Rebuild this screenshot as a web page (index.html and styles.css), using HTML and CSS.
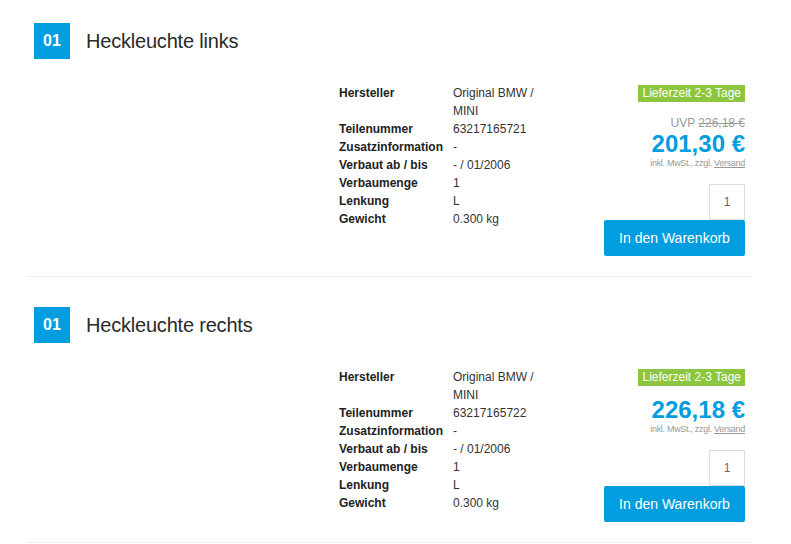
FILE: index.html
```html
<!DOCTYPE html>
<html lang="de">
<head>
<meta charset="utf-8">
<title>Heckleuchte</title>
<link rel="stylesheet" href="styles.css">
</head>
<body>
<div class="list">
  <section class="item">
    <div class="item-head">
      <span class="pos">01</span>
      <h2 class="item-title">Heckleuchte links</h2>
    </div>
    <div class="item-body">
      <div class="item-image"></div>
      <table class="specs">
        <tr><th>Hersteller</th><td>Original BMW / MINI</td></tr>
        <tr><th>Teilenummer</th><td>63217165721</td></tr>
        <tr><th>Zusatzinformation</th><td>-</td></tr>
        <tr><th>Verbaut ab / bis</th><td>- / 01/2006</td></tr>
        <tr><th>Verbaumenge</th><td>1</td></tr>
        <tr><th>Lenkung</th><td>L</td></tr>
        <tr><th>Gewicht</th><td>0.300 kg</td></tr>
      </table>
      <div class="buy">
        <span class="delivery">Lieferzeit 2-3 Tage</span>
        <div class="uvp">UVP <s>226,18 €</s></div>
        <div class="price">201,30 €</div>
        <div class="tax">inkl. MwSt., zzgl. <a href="#">Versand</a></div>
        <input class="qty" type="text" value="1">
        <button class="cart" type="button">In den Warenkorb</button>
      </div>
    </div>
  </section>
  <section class="item">
    <div class="item-head">
      <span class="pos">01</span>
      <h2 class="item-title">Heckleuchte rechts</h2>
    </div>
    <div class="item-body">
      <div class="item-image"></div>
      <table class="specs">
        <tr><th>Hersteller</th><td>Original BMW / MINI</td></tr>
        <tr><th>Teilenummer</th><td>63217165722</td></tr>
        <tr><th>Zusatzinformation</th><td>-</td></tr>
        <tr><th>Verbaut ab / bis</th><td>- / 01/2006</td></tr>
        <tr><th>Verbaumenge</th><td>1</td></tr>
        <tr><th>Lenkung</th><td>L</td></tr>
        <tr><th>Gewicht</th><td>0.300 kg</td></tr>
      </table>
      <div class="buy">
        <span class="delivery">Lieferzeit 2-3 Tage</span>
        <div class="price">226,18 €</div>
        <div class="tax">inkl. MwSt., zzgl. <a href="#">Versand</a></div>
        <input class="qty" type="text" value="1">
        <button class="cart" type="button">In den Warenkorb</button>
      </div>
    </div>
  </section>
</div>
</body>
</html>
```
FILE: styles.css
```css
* { box-sizing: border-box; }
html, body { margin: 0; padding: 0; background: #fff; }
body {
  font-family: "Liberation Sans", Arial, sans-serif;
  color: #333;
  overflow: hidden;
}
.list {
  width: 725px;
  margin-left: 27px;
}
.item {
  padding: 23px 7px 20px;
  border-bottom: 1px solid #eeeeee;
  margin-bottom: 7px;
}
.item-head {
  display: flex;
  align-items: center;
  gap: 16px;
  height: 36px;
}
.pos {
  width: 36px;
  height: 36px;
  background: #009ee0;
  color: #fff;
  font-weight: bold;
  font-size: 16px;
  display: flex;
  align-items: center;
  justify-content: center;
}
.item-title {
  margin: 0;
  font-size: 20px;
  font-weight: normal;
  color: #2a2a2a;
  letter-spacing: -0.2px;
}
.item-body {
  display: grid;
  grid-template-columns: 1fr 209px 141px;
  column-gap: 56px;
  margin-top: 25px;
  align-items: start;
}
.specs {
  border-collapse: collapse;
  font-size: 12px;
  line-height: 18px;
}
.specs th, .specs td {
  padding: 0;
  vertical-align: top;
  text-align: left;
}
.specs th {
  width: 114px;
  font-weight: bold;
  color: #222;
}
.specs td {
  color: #333;
  width: 95px;
}
.buy {
  display: flex;
  flex-direction: column;
  align-items: flex-end;
}
.delivery {
  margin-top: 1px;
  background: #8cc63f;
  color: #fff;
  font-size: 12px;
  line-height: 17px;
  padding: 0 4px;
  margin-bottom: 12px;
}
.uvp {
  font-size: 12px;
  line-height: 18px;
  color: #999;
}
.uvp s { color: #999; }
.price {
  font-size: 24px;
  line-height: 24px;
  font-weight: bold;
  color: #009de0;
}
.tax {
  font-size: 9px;
  line-height: 14px;
  letter-spacing: -0.3px;
  color: #999;
}
.tax a {
  color: #999;
  text-decoration: underline;
}
.qty {
  margin-top: 14px;
  width: 36px;
  height: 36px;
  border: 1px solid #dddddd;
  text-align: center;
  font: 12px "Liberation Sans", Arial, sans-serif;
  color: #666;
  padding: 0;
  background: #fff;
}
.cart {
  width: 141px;
  height: 36px;
  border: 0;
  border-radius: 2px;
  background: #009ee0;
  color: #fff;
  font: 14px "Liberation Sans", Arial, sans-serif;
  padding: 0;
  cursor: pointer;
}
```
